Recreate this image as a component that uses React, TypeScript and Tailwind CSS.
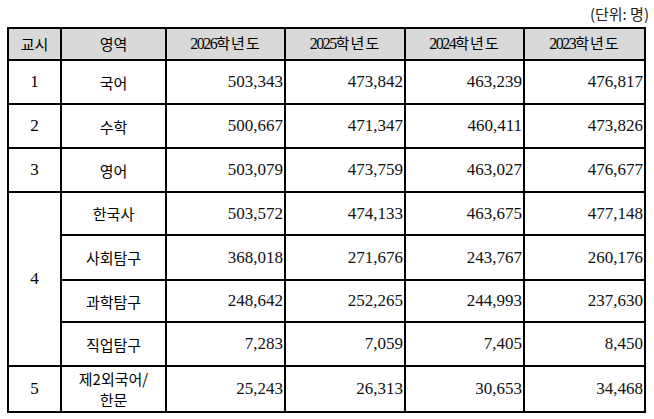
const years = ['2026', '2025', '2024', '2023'];

type Row = {
  period?: string;
  span?: number;
  area: string[];
  values: string[];
  h: string;
};

const rows: Row[] = [
  { period: '1', area: ['국어'], values: ['503,343', '473,842', '463,239', '476,817'], h: 'h-[44px]' },
  { period: '2', area: ['수학'], values: ['500,667', '471,347', '460,411', '473,826'], h: 'h-[44px]' },
  { period: '3', area: ['영어'], values: ['503,079', '473,759', '463,027', '476,677'], h: 'h-[44px]' },
  { period: '4', span: 4, area: ['한국사'], values: ['503,572', '474,133', '463,675', '477,148'], h: 'h-[43px]' },
  { area: ['사회탐구'], values: ['368,018', '271,676', '243,767', '260,176'], h: 'h-[45px]' },
  { area: ['과학탐구'], values: ['248,642', '252,265', '244,993', '237,630'], h: 'h-[42px]' },
  { area: ['직업탐구'], values: ['7,283', '7,059', '7,405', '8,450'], h: 'h-[44px]' },
  { period: '5', area: ['제2외국어/', '한문'], values: ['25,243', '26,313', '30,653', '34,468'], h: 'h-[46px]' },
];

const cell = 'border-2 border-black p-0';
const serif = "font-['Liberation_Serif','Times_New_Roman',serif]";
const kr = "font-['Noto_Sans_CJK_KR',sans-serif]";

export default function App() {
  return (
    <div className={`w-[654px] h-[419px] bg-white text-black ${kr}`}>
      <div className="flex justify-end pr-[5px] pt-[5px] h-[27px] text-[15px] leading-[18px] text-[#222]">
        (단위: 명)
      </div>

      <table className="ml-[7px] w-[637px] table-fixed border-collapse">
        <colgroup>
          <col className="w-[53px]" />
          <col className="w-[105px]" />
          <col className="w-[119px]" />
          <col className="w-[120px]" />
          <col className="w-[119px]" />
          <col className="w-[121px]" />
        </colgroup>
        <thead>
          <tr className="h-[32px] bg-[#d9d9d9] text-[15px]">
            <th className={`${cell} font-normal`}>교시</th>
            <th className={`${cell} font-normal`}>영역</th>
            {years.map((y) => (
              <th key={y} className={`${cell} font-normal`}>
                <span className={`${serif} tracking-[-1.5px] text-[16px]`}>{y}</span>
                <span className="tracking-[1px]">학년도</span>
              </th>
            ))}
          </tr>
        </thead>
        <tbody>
          {rows.map((r, i) => (
            <tr key={i} className={r.h}>
              {r.period && (
                <td rowSpan={r.span} className={`${cell} ${serif} text-center text-[17px]`}>
                  {r.period}
                </td>
              )}
              <td className={`${cell} text-center text-[15px] leading-[21px]`}>
                {r.area.map((a) => (
                  <div key={a}>{a}</div>
                ))}
              </td>
              {r.values.map((v, j) => (
                <td key={j} className={`${cell} ${serif} text-right pr-[1px] text-[17px] text-[#111]`}>
                  {v}
                </td>
              ))}
            </tr>
          ))}
        </tbody>
      </table>
    </div>
  );
}
